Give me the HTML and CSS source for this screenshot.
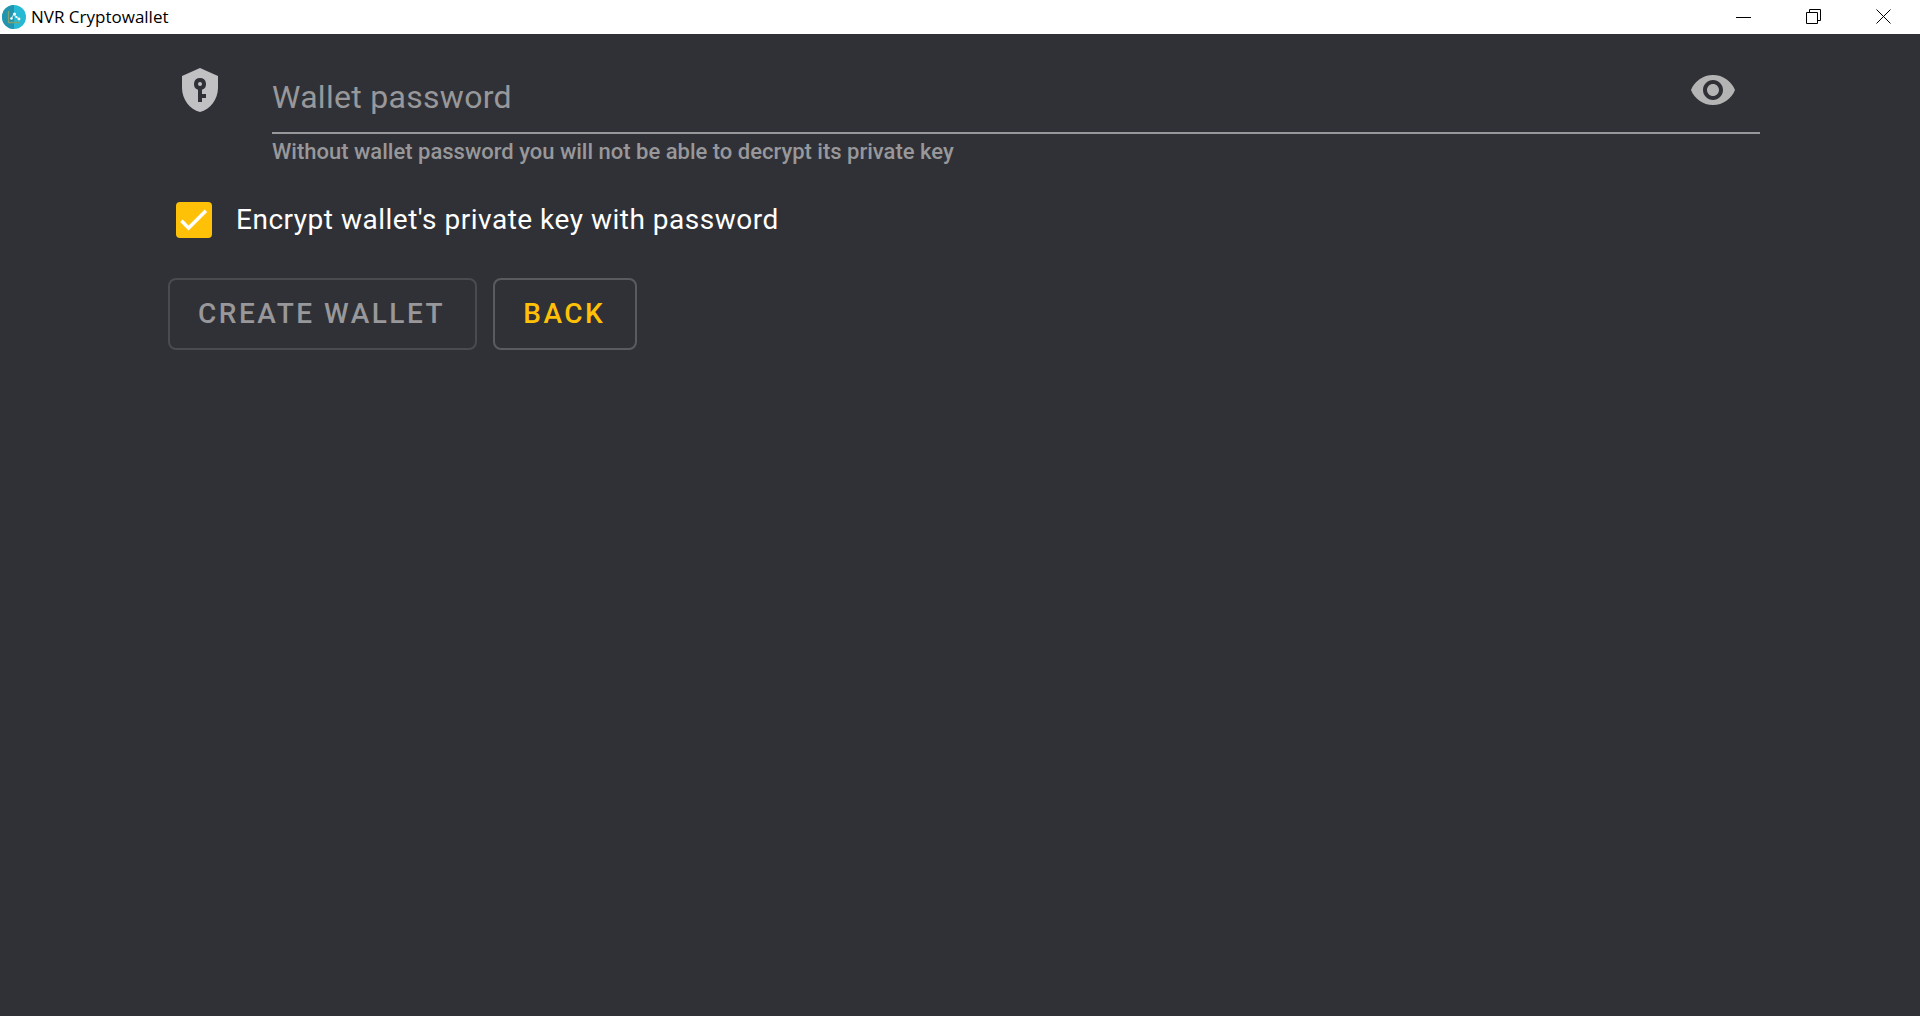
FILE: index.html
```html
<!DOCTYPE html>
<html lang="en">
<head>
<meta charset="utf-8">
<title>NVR Cryptowallet</title>
<link rel="stylesheet" href="styles.css">
</head>
<body>
<header class="titlebar">
  <svg class="titlebar-logo" viewBox="0 0 24 24" aria-hidden="true">
    <circle cx="12" cy="12" r="12" fill="#27b9d4"/>
    <path d="M12 0a12 12 0 0 0 0 24z" fill="#2394ae"/>
    <path d="M6.500 6v11.500H18" fill="none" stroke="#7fa374" stroke-width="1.300"/>
    <path d="M9 14l3-5 2 3 3 2" fill="none" stroke="#b5dbe5" stroke-width="1.200"/>
    <g fill="#f0f8fa"><circle cx="9.500" cy="13.500" r="1.300"/><circle cx="12.500" cy="9" r="1.600"/><circle cx="14.500" cy="12" r="1.100"/><circle cx="17" cy="14" r="1.400"/></g>
  </svg>
  <h1 class="titlebar-name">NVR Cryptowallet</h1>
  <div class="window-controls">
    <button class="window-button" type="button" aria-label="Minimize"><svg viewBox="0 0 16 16"><path d="M0 8.500h15"/></svg></button>
    <button class="window-button" type="button" aria-label="Restore"><svg viewBox="0 0 16 16"><path d="M.5 3.500h11v11H.5zM3.500 3.500v-3h11v11h-3"/></svg></button>
    <button class="window-button" type="button" aria-label="Close"><svg viewBox="0 0 16 16"><path d="M.5 .5l14 14M14.500 .5l-14 14"/></svg></button>
  </div>
</header>
<main class="content">
  <form class="wallet-form">
    <div class="password-row">
      <svg class="shield-icon" viewBox="0 0 24 24" aria-hidden="true"><path fill-rule="evenodd" d="M12 1l9 4v6c0 5.550-3.840 10.740-9 12-5.160-1.260-9-6.450-9-12V5zM12 6a3 3 0 0 0-1 5.830V18h2v-2h2v-2h-2v-2.170A3 3 0 0 0 12 6zm0 2a1 1 0 1 1 0 2 1 1 0 0 1 0-2z"/></svg>
      <div class="field">
        <div class="field-box">
          <input class="field-input" id="password" type="password" placeholder="Wallet password" aria-label="Wallet password" aria-describedby="password-help">
          <button class="reveal-button" type="button" aria-label="Show password"><svg viewBox="0 0 24 24"><path d="M12 4.500C7 4.500 2.730 7.610 1 12c1.730 4.390 6 7.500 11 7.500s9.270-3.110 11-7.500c-1.730-4.390-6-7.500-11-7.500zM12 17c-2.760 0-5-2.240-5-5s2.240-5 5-5 5 2.240 5 5-2.240 5-5 5zm0-8c-1.660 0-3 1.340-3 3s1.340 3 3 3 3-1.340 3-3-1.340-3-3-3z"/></svg></button>
        </div>
        <p class="field-help" id="password-help">Without wallet password you will not be able to decrypt its private key</p>
      </div>
    </div>
    <div class="encrypt-row">
      <span class="checkbox">
        <input class="checkbox-input" id="encrypt" type="checkbox" checked>
        <svg class="checkbox-mark" viewBox="0 0 24 24" aria-hidden="true"><path d="M1.200 12.600L7.400 18.800 22.200 4"/></svg>
      </span>
      <label class="encrypt-label" for="encrypt">Encrypt wallet's private key with password</label>
    </div>
    <div class="actions">
      <button class="button" type="submit" disabled>CREATE WALLET</button>
      <button class="button" type="button">BACK</button>
    </div>
  </form>
</main>
</body>
</html>
```
FILE: styles.css
```css
* { box-sizing: border-box; }

body {
  margin: 0;
  min-height: 100vh;
  background: #303136;
  color: #fff;
  font-family: Roboto, "Liberation Sans", sans-serif;
}

button { font-family: inherit; }

.titlebar {
  display: flex;
  align-items: center;
  height: 34px;
  padding: 0 1px 0 2px;
  background: #fff;
  color: #000;
}

.titlebar-logo { width: 24px; height: 24px; }

.titlebar-name {
  margin: 0 0 0 5px;
  font: 400 17px/24px "Open Sans", "Noto Sans", sans-serif;
}

.window-controls { display: flex; margin-left: auto; }

.window-button {
  display: grid;
  place-items: center;
  width: 70px;
  height: 34px;
  padding: 0;
  border: 0;
  background: none;
}

.window-button svg {
  width: 16px;
  height: 16px;
  fill: none;
  stroke: #000;
}

.content { padding: 32px 160px 32px 168px; }

.password-row {
  display: flex;
  gap: 48px;
  padding-left: 8px;
}

.shield-icon {
  flex: none;
  width: 48px;
  height: 48px;
  fill: #c1c1c3;
}

.field { flex: 1; }

.field-box {
  display: flex;
  height: 68px;
  padding-right: 23px;
  border-bottom: 2px solid #98989b;
}

.field-input {
  flex: 1;
  min-width: 0;
  height: 62px;
  padding: 0;
  border: 0;
  outline: 0;
  background: none;
  color: #fff;
  font: 400 32px/40px Roboto, "Liberation Sans", sans-serif;
  letter-spacing: 0.009em;
}

.field-input::placeholder { color: #98989b; opacity: 1; }

.reveal-button {
  width: 48px;
  height: 48px;
  padding: 0;
  border: 0;
  background: none;
}

.reveal-button svg {
  display: block;
  width: 48px;
  height: 48px;
  fill: #b4b4b4;
}

.field-help {
  margin: 4px 0 0;
  color: #98989b;
  font-size: 22px;
  font-weight: 500;
  line-height: 28px;
}

.encrypt-row {
  display: flex;
  align-items: center;
  gap: 24px;
  margin-top: 36px;
  padding-left: 8px;
}

.checkbox {
  display: grid;
  width: 36px;
  height: 36px;
}

.checkbox-input,
.checkbox-mark { grid-area: 1 / 1; }

.checkbox-input {
  appearance: none;
  width: 36px;
  height: 36px;
  margin: 0;
  border-radius: 4px;
  background: #ffc107;
}

.checkbox-mark {
  place-self: center;
  z-index: 1;
  width: 28px;
  height: 28px;
  pointer-events: none;
  fill: none;
  stroke: #fff;
  stroke-width: 3;
  visibility: hidden;
}

.checkbox-input:checked + .checkbox-mark { visibility: visible; }

.encrypt-label {
  font-size: 28px;
  line-height: 36px;
  letter-spacing: 0.018em;
}

.actions {
  display: flex;
  gap: 16px;
  margin-top: 40px;
}

.button {
  height: 72px;
  padding: 0 30px 0 28px;
  border: 2px solid #5a5b5f;
  border-radius: 8px;
  background: none;
  color: #ffc107;
  font-size: 28px;
  font-weight: 500;
  line-height: 32px;
  letter-spacing: 0.09em;
}

.button:disabled {
  border-color: #4a4b4f;
  color: #98989b;
}
```
